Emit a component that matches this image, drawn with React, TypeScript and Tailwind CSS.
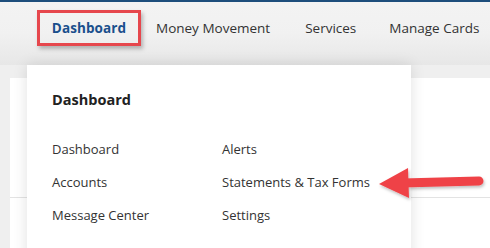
import React from "react";

export default function App() {
  const font = { fontFamily: '"Open Sans", "Noto Sans", sans-serif' };
  return (
    <div
      className="relative w-[490px] h-[248px] overflow-hidden bg-[#efefef]"
      style={font}
    >
      <div className="h-[2px] bg-[#1d4e7c]" />
      {/* nav */}
      <div className="h-[63px] bg-gradient-to-b from-[#f3f3f3] via-[#f1f1f1] to-[#e7e7e7] flex items-start">
        <div className="ml-[37px] mt-[8px] w-[104px] h-[36px] border-[3px] border-[#e6474d] shadow-[2px_3px_4px_rgba(0,0,0,0.25)] flex items-center justify-center">
          <span className="text-[13.5px] font-bold text-[#1a4f8c] tracking-[0.1px]">Dashboard</span>
        </div>
        <div className="flex items-center h-[36px] mt-[8px] text-[13.5px] text-[#333]">
          <span className="ml-[15px] whitespace-nowrap">Money Movement</span>
          <span className="ml-[35px]">Services</span>
          <span className="ml-[33px] whitespace-nowrap">Manage Cards</span>
        </div>
      </div>
      {/* page content under dropdown */}
      <div className="flex h-[183px]">
        <div className="w-[10px]" />
        <div className="flex-1 flex flex-col">
          <div className="h-[13px]" />
          <div className="flex-1 bg-white flex flex-col">
            <div className="h-[119px]" />
            <div className="h-px bg-[#e3e3e3]" />
          </div>
        </div>
      </div>
      {/* dropdown */}
      <div className="absolute left-[27px] top-[65px] w-[384px] h-[200px] bg-white shadow-[0_0_14px_rgba(0,0,0,0.12)] pl-[25px] pt-[24px]">
        <div className="text-[14.5px] font-bold text-[#222] leading-[22px]">Dashboard</div>
        <div className="grid grid-cols-[170px_1fr] mt-[28px] text-[13px] text-[#333] leading-[20px] gap-y-[13px]">
          <span>Dashboard</span>
          <span>Alerts</span>
          <span>Accounts</span>
          <span>Statements &amp; Tax Forms</span>
          <span>Message Center</span>
          <span>Settings</span>
        </div>
      </div>
      {/* arrow */}
      <svg
        className="absolute left-0 top-0"
        width="490"
        height="248"
        viewBox="0 0 490 248"
      >
        <defs>
          <filter id="sh" x="-20%" y="-50%" width="140%" height="200%">
            <feDropShadow dx="1" dy="2" stdDeviation="1.5" floodColor="#000" floodOpacity="0.25" />
          </filter>
        </defs>
        <g filter="url(#sh)" fill="#ef4347">
          <line x1="402" y1="183" x2="479" y2="181" stroke="#ef4347" strokeWidth="9" strokeLinecap="round" />
          <polygon points="379,184 408,168 409,198" />
        </g>
      </svg>
    </div>
  );
}
